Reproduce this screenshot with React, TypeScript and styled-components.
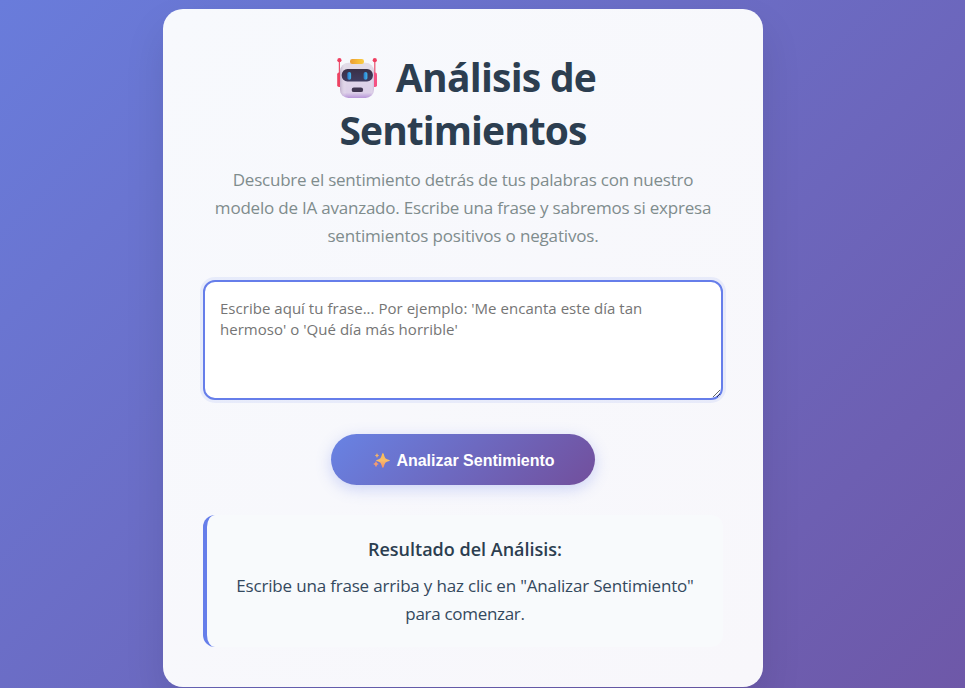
import React from 'react';
import styled, { createGlobalStyle } from 'styled-components';

const GlobalStyle = createGlobalStyle`
  * { margin: 0; padding: 0; box-sizing: border-box; }
  body { overflow: hidden; font-family: 'Open Sans', 'Noto Sans', sans-serif; }
`;

const Page = styled.div`
  height: 688px;
  padding: 9px 202px 0 163px;
  overflow: hidden;
  background: linear-gradient(135deg, #697cdb 0%, #6e58a8 100%);
`;

const Card = styled.main`
  width: 600px;
  height: 678px;
  padding: 40px;
  border-radius: 20px;
  background: linear-gradient(135deg, #f7f9fd, #f8f7fb);
  box-shadow: 0 20px 40px rgba(0, 0, 0, 0.1);
  text-align: center;
`;

const Title = styled.h1`
  height: 107px;
  padding-top: 1px;
  margin-bottom: 10px;
  font-size: 39px;
  font-weight: 700;
  line-height: 53px;
  color: #2c3e50;
`;

const Line = styled.span<{ $spacing: number }>`
  display: block;
  white-space: nowrap;
  letter-spacing: ${({ $spacing }) => $spacing}px;
`;

const TitleLine = styled(Line)`
  display: flex;
  justify-content: center;
`;

const RobotIcon = styled.svg`
  width: 42px;
  height: 42px;
  margin: 7px 18px 0 6px;
`;

const Description = styled.p`
  margin-bottom: 30px;
  font-size: 17px;
  line-height: 28px;
  color: #7f8c8d;
`;

const PhraseInput = styled.textarea`
  display: block;
  width: 520px;
  height: 120px;
  padding: 16px 15px 14px;
  border: 2px solid #667eea;
  border-radius: 12px;
  outline: none;
  background: #fff;
  box-shadow: 0 0 0 3px rgba(102, 126, 234, 0.1);
  font: 400 15px/21px 'Open Sans', 'Noto Sans', sans-serif;
  letter-spacing: 0.03px;
  resize: vertical;
  &::placeholder { color: #757575; }
`;

const AnalyzeButton = styled.button`
  display: flex;
  align-items: center;
  justify-content: center;
  gap: 6px;
  width: 264px;
  height: 51px;
  margin: 34px auto 30px;
  border: 0;
  border-radius: 26px;
  background: linear-gradient(135deg, #6883e4 0%, #724f9c 100%);
  box-shadow: 0 4px 15px rgba(102, 126, 234, 0.3);
  color: #fff;
  font: 700 16px 'Liberation Sans', Arial, sans-serif;
  padding: 2px 0 0 2px;
`;

const SparkleIcon = styled.svg`
  width: 17px;
  height: 17px;
`;

const Result = styled.section`
  height: 132px;
  padding: 20px;
  border-left: 4px solid #667eea;
  border-radius: 12px;
  background: #f8fafc;
`;

const ResultTitle = styled.h3`
  height: 27px;
  margin-bottom: 10px;
  font-size: 18px;
  font-weight: 600;
  line-height: 28px;
  color: #2c3e50;
`;

const ResultText = styled.p`
  font-size: 17px;
  line-height: 28px;
  color: #34495e;
`;

function Robot() {
  return (
    <RobotIcon viewBox="0 0 42 42" aria-hidden="true">
      <defs>
        <linearGradient id="head" x1="0" y1="0" x2="0" y2="1">
          <stop offset="0" stopColor="#e3dde8" />
          <stop offset="0.85" stopColor="#dccfe8" />
          <stop offset="1" stopColor="#b795d8" />
        </linearGradient>
        <linearGradient id="shade" x1="0" y1="0" x2="1" y2="0">
          <stop offset="0" stopColor="#a693b5" stopOpacity="0.6" />
          <stop offset="0.18" stopColor="#fff" stopOpacity="0" />
          <stop offset="0.9" stopColor="#fff" stopOpacity="0" />
          <stop offset="1" stopColor="#b69bcb" stopOpacity="0.4" />
        </linearGradient>
        <linearGradient id="visor" x1="0" y1="0" x2="0" y2="1">
          <stop offset="0" stopColor="#393047" />
          <stop offset="1" stopColor="#403d61" />
        </linearGradient>
        <linearGradient id="cap" x1="0" y1="0" x2="1" y2="0">
          <stop offset="0" stopColor="#e99b35" />
          <stop offset="0.6" stopColor="#f6bd38" />
          <stop offset="1" stopColor="#f8cb45" />
        </linearGradient>
        <linearGradient id="eye" x1="0" y1="0" x2="1" y2="0">
          <stop offset="0" stopColor="#2878c6" />
          <stop offset="1" stopColor="#45b8f0" />
        </linearGradient>
      </defs>
      <path d="M3.4 4v13M38.8 4v13" stroke="#e9526f" strokeWidth="1.2" />
      <circle cx="3.4" cy="3.2" r="2.1" fill="#ef3f61" />
      <circle cx="38.8" cy="3.2" r="2.1" fill="#ef3f61" />
      <rect x="1.2" y="15.5" width="5" height="14.5" rx="1.8" fill="#ed4262" />
      <rect x="36" y="15.5" width="5" height="14.5" rx="1.8" fill="#f45183" />
      <rect x="4" y="5.8" width="34" height="35.2" rx="8.5" fill="url(#head)" />
      <rect x="4" y="5.8" width="34" height="35.2" rx="8.5" fill="url(#shade)" />
      <rect x="14" y="2" width="14" height="5" rx="2.2" fill="url(#cap)" />
      <rect x="5.7" y="12" width="31.2" height="12.5" rx="5.8" fill="url(#visor)" />
      <rect x="11.3" y="15" width="3.8" height="7.7" rx="1.8" fill="url(#eye)" />
      <rect x="27.6" y="15" width="3.8" height="7.7" rx="1.8" fill="url(#eye)" />
      <rect x="15.7" y="30.5" width="11.4" height="4.6" rx="2.2" fill="#403650" />
    </RobotIcon>
  );
}

function Sparkles() {
  return (
    <SparkleIcon viewBox="0 0 17 17" aria-hidden="true">
      <defs>
        <linearGradient id="gold" x1="0" y1="0" x2="0" y2="1">
          <stop offset="0" stopColor="#f8bc55" />
          <stop offset="0.5" stopColor="#f9bd68" />
          <stop offset="1" stopColor="#f38b65" />
        </linearGradient>
      </defs>
      <path d="M9.9 1Q10.7 1 11.4 4.3Q12 6.6 14 7.2Q17 7.9 17 8.5T14 9.8Q12 10.4 11.4 12.7Q10.7 16 9.9 16T8.4 12.7Q7.8 10.4 5.8 9.8Q3 9.1 3 8.5T5.8 7.2Q7.8 6.6 8.4 4.3Q9.1 1 9.9 1Z" fill="url(#gold)" />
      <path d="M4 .9Q4.4 3 6.2 3.4Q4.4 3.8 4 5.9Q3.6 3.8 1.8 3.4Q3.6 3 4 .9Z" fill="#f5b568" />
      <path d="M3 9.1Q3.7 11.5 5.8 12.1Q3.7 12.7 3 15.2Q2.3 12.7 .2 12.1Q2.3 11.5 3 9.1Z" fill="#f39b72" />
    </SparkleIcon>
  );
}

export default function App() {
  return (
    <>
      <GlobalStyle />
      <Page>
        <Card>
          <Title>
            <TitleLine $spacing={-0.74}><Robot />Análisis de</TitleLine>
            <Line $spacing={-0.95}>Sentimientos</Line>
          </Title>
          <Description>
            <Line $spacing={-0.22}>Descubre el sentimiento detrás de tus palabras con nuestro</Line>
            <Line $spacing={-0.215}>modelo de IA avanzado. Escribe una frase y sabremos si expresa</Line>
            <Line $spacing={-0.16}>sentimientos positivos o negativos.</Line>
          </Description>
          <PhraseInput placeholder="Escribe aquí tu frase... Por ejemplo: 'Me encanta este día tan hermoso' o 'Qué día más horrible'" />
          <AnalyzeButton><Sparkles />Analizar Sentimiento</AnalyzeButton>
          <Result>
            <ResultTitle><Line $spacing={0}>Resultado del Análisis:</Line></ResultTitle>
            <ResultText>
              <Line $spacing={-0.18}>Escribe una frase arriba y haz clic en "Analizar Sentimiento"</Line>
              <Line $spacing={-0.3}>para comenzar.</Line>
            </ResultText>
          </Result>
        </Card>
      </Page>
    </>
  );
}
